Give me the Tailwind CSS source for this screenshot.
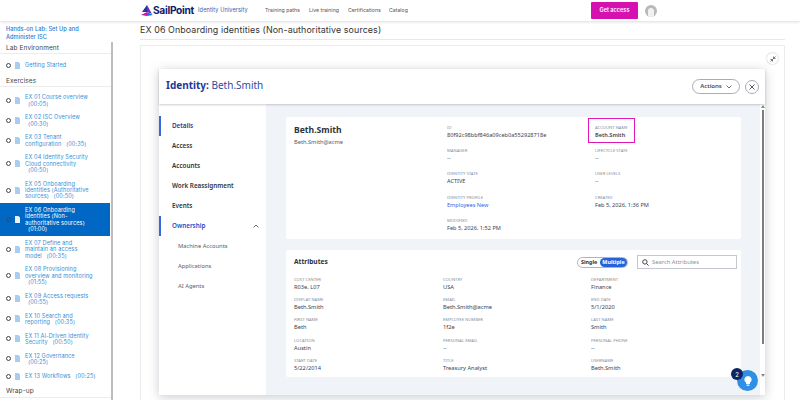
<!DOCTYPE html>
<html lang="en">
<head>
  <meta charset="UTF-8">
  <title>EX 06 Onboarding identities</title>
  <script src="https://cdn.jsdelivr.net/npm/@tailwindcss/browser@4"></script>
</head>
<body class="bg-white">
  <div class="w-[800px] h-[400px] overflow-hidden flex flex-col relative font-['Inter',sans-serif]">
    <!-- Header -->
    <header class="h-[21px] shrink-0 bg-white shadow-[0_1px_3px_rgba(0,0,0,0.14)] relative z-10 flex items-center pl-[141px]">
      <svg class="w-[12px] h-[12px]" viewBox="0 0 12 12">
        <polygon points="6,0 6,7 1,7" fill="#2f2f9e"/>
        <polygon points="6,0 11,9 6,7" fill="#6a2fc0"/>
        <polygon points="0,10 6,7 6,11" fill="#c516a8"/>
        <polygon points="6,7 12,10 6,11" fill="#1a73d8"/>
      </svg>
      <span class="text-[10.2px] font-bold text-[#10206b] w-[40px] tracking-[-0.3px] whitespace-nowrap">SailPoint</span>
      <span class="text-[5.6px] text-[#3a5cb0] w-[67px] ml-[5px] tracking-[0.1px] whitespace-nowrap">Identity University</span>
      <nav class="flex w-[326px] text-[5.2px] text-[#555]">
        <span class="w-[44px]">Training paths</span>
        <span class="w-[39px]">Live training</span>
        <span class="w-[41px]">Certifications</span>
        <span>Catalog</span>
      </nav>
      <span class="w-[47px] h-[17px] bg-[#d512b0] rounded-[1px] text-white text-[5.6px] font-semibold flex items-center justify-center">Get access</span>
      <span class="ml-[7px] w-[12px] h-[12px] rounded-full bg-[#b9b9b9] flex items-end justify-center overflow-hidden">
        <span class="w-[6px] h-[9px] rounded-t-full bg-[#f1f1f1]"></span>
      </span>
    </header>

    <div class="flex flex-1 min-h-0">
      <!-- Sidebar -->
      <aside class="w-[113px] shrink-0 relative pt-[4px] text-[5.6px] leading-[6.4px] tracking-[0.1px] text-[#3a8fd6] overflow-hidden">
        <div class="absolute right-0 top-[21px] bottom-0 w-[2px] bg-[#bdbdbd]"></div>
        <div class="pl-[6px] leading-[8px] text-[#1b7bd0] font-medium">Hands-on Lab: Set Up and<br>Administer ISC</div>
        <div class="pl-[6px] mt-[3px] h-[10px] text-[6.5px] leading-[9px] text-[#444] border-b border-[#ececec] w-[111px]">Lab Environment</div>
        <div class="flex items-center pl-[6px] h-[23px] w-[111px]">
          <span class="w-[5px] h-[5px] rounded-full border border-[#444] mr-[4px]"></span>
          <svg class="w-[5px] h-[7px] mr-[5px]" viewBox="0 0 5 7"><path d="M0 0h3.4L5 1.6V7H0z" fill="#a9cdf0"/></svg>
          <span>Getting Started</span>
        </div>
        <div class="pl-[6px] h-[10px] text-[6.5px] leading-[9px] text-[#444] border-b border-[#ececec] w-[111px]">Exercises</div>

        <div class="w-[110px] mt-[3.5px]">
          <div class="flex items-center pl-[6px] py-[3.6px]"><span class="w-[5px] h-[5px] rounded-full border border-[#444] mr-[4px] shrink-0"></span><svg class="w-[5px] h-[7px] mr-[5px] shrink-0" viewBox="0 0 5 7"><path d="M0 0h3.4L5 1.6V7H0z" fill="#a9cdf0"/></svg><span class="whitespace-nowrap">EX 01 Course overview<br><span class="ml-[3px]">(00:05)</span></span></div>
          <div class="flex items-center pl-[6px] py-[3.6px]"><span class="w-[5px] h-[5px] rounded-full border border-[#444] mr-[4px] shrink-0"></span><svg class="w-[5px] h-[7px] mr-[5px] shrink-0" viewBox="0 0 5 7"><path d="M0 0h3.4L5 1.6V7H0z" fill="#a9cdf0"/></svg><span class="whitespace-nowrap">EX 02 ISC Overview<br><span class="ml-[3px]">(00:30)</span></span></div>
          <div class="flex items-center pl-[6px] py-[3.6px]"><span class="w-[5px] h-[5px] rounded-full border border-[#444] mr-[4px] shrink-0"></span><svg class="w-[5px] h-[7px] mr-[5px] shrink-0" viewBox="0 0 5 7"><path d="M0 0h3.4L5 1.6V7H0z" fill="#a9cdf0"/></svg><span class="whitespace-nowrap">EX 03 Tenant<br>configuration <span class="ml-[3px]">(00:35)</span></span></div>
          <div class="flex items-center pl-[6px] py-[3.6px]"><span class="w-[5px] h-[5px] rounded-full border border-[#444] mr-[4px] shrink-0"></span><svg class="w-[5px] h-[7px] mr-[5px] shrink-0" viewBox="0 0 5 7"><path d="M0 0h3.4L5 1.6V7H0z" fill="#a9cdf0"/></svg><span class="whitespace-nowrap">EX 04 Identity Security<br>Cloud connectivity<br><span class="ml-[3px]">(00:50)</span></span></div>
          <div class="flex items-center pl-[6px] py-[3.6px]"><span class="w-[5px] h-[5px] rounded-full border border-[#444] mr-[4px] shrink-0"></span><svg class="w-[5px] h-[7px] mr-[5px] shrink-0" viewBox="0 0 5 7"><path d="M0 0h3.4L5 1.6V7H0z" fill="#a9cdf0"/></svg><span class="whitespace-nowrap">EX 05 Onboarding<br>identities (Authoritative<br>sources) <span class="ml-[3px]">(00:50)</span></span></div>
          <div class="flex items-center pl-[6px] py-[3.6px] bg-[#0067c5] text-white"><span class="w-[5px] h-[5px] rounded-full border border-[#2a4f7a] mr-[4px] shrink-0"></span><svg class="w-[5px] h-[7px] mr-[5px] shrink-0" viewBox="0 0 5 7"><path d="M0 0h3.4L5 1.6V7H0z" fill="#e8f2fb"/></svg><span class="whitespace-nowrap">EX 06 Onboarding<br>identities (Non-<br>authoritative sources)<br><span class="ml-[3px]">(01:00)</span></span></div>
          <div class="flex items-center pl-[6px] py-[3.6px]"><span class="w-[5px] h-[5px] rounded-full border border-[#444] mr-[4px] shrink-0"></span><svg class="w-[5px] h-[7px] mr-[5px] shrink-0" viewBox="0 0 5 7"><path d="M0 0h3.4L5 1.6V7H0z" fill="#a9cdf0"/></svg><span class="whitespace-nowrap">EX 07 Define and<br>maintain an access<br>model <span class="ml-[3px]">(00:35)</span></span></div>
          <div class="flex items-center pl-[6px] py-[3.6px]"><span class="w-[5px] h-[5px] rounded-full border border-[#444] mr-[4px] shrink-0"></span><svg class="w-[5px] h-[7px] mr-[5px] shrink-0" viewBox="0 0 5 7"><path d="M0 0h3.4L5 1.6V7H0z" fill="#a9cdf0"/></svg><span class="whitespace-nowrap">EX 08 Provisioning<br>overview and monitoring<br><span class="ml-[3px]">(01:55)</span></span></div>
          <div class="flex items-center pl-[6px] py-[3.6px]"><span class="w-[5px] h-[5px] rounded-full border border-[#444] mr-[4px] shrink-0"></span><svg class="w-[5px] h-[7px] mr-[5px] shrink-0" viewBox="0 0 5 7"><path d="M0 0h3.4L5 1.6V7H0z" fill="#a9cdf0"/></svg><span class="whitespace-nowrap">EX 09 Access requests<br><span class="ml-[3px]">(00:55)</span></span></div>
          <div class="flex items-center pl-[6px] py-[3.6px]"><span class="w-[5px] h-[5px] rounded-full border border-[#444] mr-[4px] shrink-0"></span><svg class="w-[5px] h-[7px] mr-[5px] shrink-0" viewBox="0 0 5 7"><path d="M0 0h3.4L5 1.6V7H0z" fill="#a9cdf0"/></svg><span class="whitespace-nowrap">EX 10 Search and<br>reporting <span class="ml-[3px]">(00:35)</span></span></div>
          <div class="flex items-center pl-[6px] py-[3.6px]"><span class="w-[5px] h-[5px] rounded-full border border-[#444] mr-[4px] shrink-0"></span><svg class="w-[5px] h-[7px] mr-[5px] shrink-0" viewBox="0 0 5 7"><path d="M0 0h3.4L5 1.6V7H0z" fill="#a9cdf0"/></svg><span class="whitespace-nowrap">EX 11 AI-Driven Identity<br>Security <span class="ml-[3px]">(00:50)</span></span></div>
          <div class="flex items-center pl-[6px] py-[3.6px]"><span class="w-[5px] h-[5px] rounded-full border border-[#444] mr-[4px] shrink-0"></span><svg class="w-[5px] h-[7px] mr-[5px] shrink-0" viewBox="0 0 5 7"><path d="M0 0h3.4L5 1.6V7H0z" fill="#a9cdf0"/></svg><span class="whitespace-nowrap">EX 12 Governance<br><span class="ml-[3px]">(00:25)</span></span></div>
          <div class="flex items-center pl-[6px] py-[3.6px]"><span class="w-[5px] h-[5px] rounded-full border border-[#444] mr-[4px] shrink-0"></span><svg class="w-[5px] h-[7px] mr-[5px] shrink-0" viewBox="0 0 5 7"><path d="M0 0h3.4L5 1.6V7H0z" fill="#a9cdf0"/></svg><span class="whitespace-nowrap">EX 13 Workflows <span class="ml-[3px]">(00:25)</span></span></div>
        </div>
        <div class="pl-[6px] mt-[4px] h-[11px] text-[6.5px] leading-[9px] text-[#444] border-b border-[#ececec] w-[111px]">Wrap-up</div>
      </aside>

      <!-- Main -->
      <main class="flex-1 min-w-0 pl-[27px] pr-[15px]">
        <h1 class="h-[19px] pt-[3px] text-[8.9px] leading-[12px] text-[#333] border-b border-[#e8e8e8] tracking-[0.1px] whitespace-nowrap">EX 06 Onboarding identities (Non-authoritative sources)</h1>
        <div class="mt-[5px] h-[400px] border border-[#ececec] pt-[23px] pl-[18px] pr-[19px] relative">
          <span class="absolute right-[6px] top-[7px] w-[11px] h-[11px] rounded-full bg-white shadow-[0_0_2px_rgba(0,0,0,0.3)] flex items-center justify-center">
            <svg class="w-[6px] h-[6px]" viewBox="0 0 6 6"><path d="M0.5 5.5L2.5 3.5M3.5 2.5L5.5 0.5M0.5 3.5h2v2M3.5 0.5v2h2" stroke="#555" stroke-width="0.8" fill="none"/></svg>
          </span>

          <!-- Identity modal -->
          <div class="w-[606px] h-[326px] bg-white shadow-[0_2px_10px_rgba(60,70,90,0.28)] flex flex-col font-['Noto_Sans',sans-serif]">
            <div class="h-[35px] shrink-0 flex items-center pl-[7px] pr-[6px] shadow-[0_1px_2px_rgba(0,0,0,0.2)] relative z-10">
              <span class="text-[10px] pb-[2px] text-[#2b4aa5]"><b class="text-[#1d3a94]">Identity:</b> Beth.Smith</span>
              <span class="ml-auto w-[48px] h-[15px] rounded-full border border-[#a8adb5] flex items-center justify-center gap-[4px] text-[6px] font-semibold text-[#444c58]">Actions
                <svg class="w-[6px] h-[4px]" viewBox="0 0 6 4"><path d="M0.5 0.5L3 3L5.5 0.5" stroke="#444c58" stroke-width="0.8" fill="none"/></svg>
              </span>
              <span class="ml-[5px] w-[14px] h-[14px] rounded-full border border-[#a8adb5] flex items-center justify-center">
                <svg class="w-[6px] h-[6px]" viewBox="0 0 6 6"><path d="M0.5 0.5L5.5 5.5M5.5 0.5L0.5 5.5" stroke="#333" stroke-width="0.8"/></svg>
              </span>
            </div>
            <div class="flex flex-1 min-h-0">
              <!-- Modal nav -->
              <nav class="w-[107px] shrink-0 pt-[12px] text-[6.3px] font-semibold text-[#333]">
                <div class="h-[20px] flex items-center pl-[11px] border-l-2 border-[#3467e0] text-[#1d3a94]">Details</div>
                <div class="h-[20px] flex items-center pl-[13px]">Access</div>
                <div class="h-[20px] flex items-center pl-[13px]">Accounts</div>
                <div class="h-[20px] flex items-center pl-[13px]">Work Reassignment</div>
                <div class="h-[20px] flex items-center pl-[13px]">Events</div>
                <div class="h-[20px] flex items-center pl-[11px] pr-[7px] border-l-2 border-[#3467e0] text-[#2450c8] justify-between">Ownership
                  <svg class="w-[6px] h-[4px]" viewBox="0 0 6 4"><path d="M0.5 3.5L3 1L5.5 3.5" stroke="#444" stroke-width="0.8" fill="none"/></svg>
                </div>
                <div class="h-[20px] flex items-center pl-[19px] font-normal text-[5.8px] text-[#555c68]">Machine Accounts</div>
                <div class="h-[20px] flex items-center pl-[19px] font-normal text-[5.8px] text-[#555c68]">Applications</div>
                <div class="h-[20px] flex items-center pl-[19px] font-normal text-[5.8px] text-[#555c68]">AI Agents</div>
              </nav>

              <!-- Modal content -->
              <div class="flex-1 min-w-0 bg-[#f0f4f8] pl-[20px] pr-[24px] pt-[13px] relative">
                <div class="absolute right-0 top-0 bottom-0 w-[5px] bg-white">
                  <div class="absolute left-[1px] top-[1px] w-0 h-0 border-x-[2px] border-b-[3px] border-x-transparent border-b-[#888]"></div>
                  <div class="absolute left-[2px] top-[6px] h-[234px] w-[2px] bg-[#7d7d7d]"></div>
                  <div class="absolute left-[1px] top-[270px] w-0 h-0 border-x-[2px] border-t-[3px] border-x-transparent border-t-[#888]"></div>
                </div>

                <!-- Profile card -->
                <section class="h-[122px] bg-white rounded-[2px] flex relative">
                  <div class="w-[161px] pl-[8px] pt-[7px]">
                    <div class="text-[8.6px] leading-[12px] font-bold text-[#2b3440]">Beth.Smith</div>
                    <div class="text-[5.7px] leading-[9px] mt-[2px] text-[#555c68]">Beth.Smith@acme</div>
                  </div>
                  <div class="w-[148px] pt-[8px] text-[5.6px] leading-[8px] text-[#3a4350]">
                    <div class="h-[23.2px]"><div class="text-[4.2px] leading-[6px] text-[#8a909a]">ID</div><div class="whitespace-nowrap">80f92c98bbf846a09ceb0a552928718e</div></div>
                    <div class="h-[23.2px]"><div class="text-[4.2px] leading-[6px] text-[#8a909a]">MANAGER</div><div>--</div></div>
                    <div class="h-[23.2px]"><div class="text-[4.2px] leading-[6px] text-[#8a909a]">IDENTITY STATE</div><div>ACTIVE</div></div>
                    <div class="h-[23.2px]"><div class="text-[4.2px] leading-[6px] text-[#8a909a]">IDENTITY PROFILE</div><div class="text-[#3467e0]">Employees New</div></div>
                    <div class="h-[23.2px]"><div class="text-[4.2px] leading-[6px] text-[#8a909a]">MODIFIED</div><div>Feb 5, 2026, 1:52 PM</div></div>
                  </div>
                  <div class="pt-[8px] text-[5.6px] leading-[8px] text-[#3a4350]">
                    <div class="h-[23.2px] relative"><div class="text-[4.2px] leading-[6px] text-[#8a909a]">ACCOUNT NAME</div><div class="font-semibold">Beth.Smith</div>
                      <div class="absolute left-[-7px] top-[-7px] w-[47px] h-[25px] border-[1.5px] border-[#e016b8]"></div>
                    </div>
                    <div class="h-[23.2px]"><div class="text-[4.2px] leading-[6px] text-[#8a909a]">LIFECYCLE STATE</div><div>--</div></div>
                    <div class="h-[23.2px]"><div class="text-[4.2px] leading-[6px] text-[#8a909a]">USER LEVELS</div><div>--</div></div>
                    <div class="h-[23.2px]"><div class="text-[4.2px] leading-[6px] text-[#8a909a]">CREATED</div><div>Feb 5, 2026, 1:36 PM</div></div>
                  </div>
                </section>

                <!-- Attributes card -->
                <section class="mt-[11px] h-[127px] bg-white rounded-[2px] pl-[8px] pt-[5px]">
                  <div class="flex items-center h-[14px]">
                    <span class="text-[6.6px] font-bold text-[#2b3440]">Attributes</span>
                    <span class="ml-auto w-[51px] h-[11px] rounded-full border border-[#b0b4ba] flex items-center text-[5.4px] font-bold text-[#333]">
                      <span class="pl-[3px] w-[22px]">Single</span>
                      <span class="flex-1 h-full rounded-full bg-[#2563d8] text-white flex items-center justify-center">Multiple</span>
                    </span>
                    <span class="ml-[9px] mr-[4px] w-[100px] h-[14px] border border-[#c4c8ce] flex items-center pl-[4px] text-[5.8px] text-[#8a909a]">
                      <svg class="w-[7px] h-[7px] mr-[3px]" viewBox="0 0 7 7"><circle cx="2.9" cy="2.9" r="2.2" stroke="#333" stroke-width="0.9" fill="none"/><path d="M4.6 4.6L6.6 6.6" stroke="#333" stroke-width="0.9"/></svg>
                      Search Attributes
                    </span>
                  </div>
                  <div class="grid grid-cols-[149px_148px_auto] mt-[8px] text-[5.7px] leading-[8px] text-[#3a4350]">
                    <div class="h-[20.2px]"><div class="text-[4.2px] leading-[6px] text-[#8a909a]">COST CENTER</div>R03e, L07</div>
                    <div class="h-[20.2px]"><div class="text-[4.2px] leading-[6px] text-[#8a909a]">COUNTRY</div>USA</div>
                    <div class="h-[20.2px]"><div class="text-[4.2px] leading-[6px] text-[#8a909a]">DEPARTMENT</div>Finance</div>
                    <div class="h-[20.2px]"><div class="text-[4.2px] leading-[6px] text-[#8a909a]">DISPLAY NAME</div>Beth.Smith</div>
                    <div class="h-[20.2px]"><div class="text-[4.2px] leading-[6px] text-[#8a909a]">EMAIL</div>Beth.Smith@acme</div>
                    <div class="h-[20.2px]"><div class="text-[4.2px] leading-[6px] text-[#8a909a]">END DATE</div>5/1/2020</div>
                    <div class="h-[20.2px]"><div class="text-[4.2px] leading-[6px] text-[#8a909a]">FIRST NAME</div>Beth</div>
                    <div class="h-[20.2px]"><div class="text-[4.2px] leading-[6px] text-[#8a909a]">EMPLOYEE NUMBER</div>1f2e</div>
                    <div class="h-[20.2px]"><div class="text-[4.2px] leading-[6px] text-[#8a909a]">LAST NAME</div>Smith</div>
                    <div class="h-[20.2px]"><div class="text-[4.2px] leading-[6px] text-[#8a909a]">LOCATION</div>Austin</div>
                    <div class="h-[20.2px]"><div class="text-[4.2px] leading-[6px] text-[#8a909a]">PERSONAL EMAIL</div>--</div>
                    <div class="h-[20.2px]"><div class="text-[4.2px] leading-[6px] text-[#8a909a]">PERSONAL PHONE</div>--</div>
                    <div class="h-[20.2px]"><div class="text-[4.2px] leading-[6px] text-[#8a909a]">START DATE</div>5/22/2014</div>
                    <div class="h-[20.2px]"><div class="text-[4.2px] leading-[6px] text-[#8a909a]">TITLE</div>Treasury Analyst</div>
                    <div class="h-[20.2px]"><div class="text-[4.2px] leading-[6px] text-[#8a909a]">USERNAME</div>Beth.Smith</div>
                  </div>
                </section>
              </div>
            </div>
          </div>
        </div>
      </main>
    </div>

    <!-- Help button -->
    <div class="absolute left-[737px] top-[370px] w-[21px] h-[21px] rounded-full bg-[#2f8fe6] flex items-center justify-center z-20">
      <svg class="w-[8px] h-[10px]" viewBox="0 0 8 10"><path d="M4 0a3.6 3.6 0 0 1 2 6.6V8H2V6.6A3.6 3.6 0 0 1 4 0z" fill="#fff"/><rect x="2.6" y="8.6" width="2.8" height="1.2" fill="#fff"/></svg>
      <span class="absolute left-[-6px] top-[-2px] w-[12px] h-[12px] rounded-full bg-[#0c2566] text-white text-[6px] flex items-center justify-center">2</span>
    </div>
  </div>
</body>
</html>
